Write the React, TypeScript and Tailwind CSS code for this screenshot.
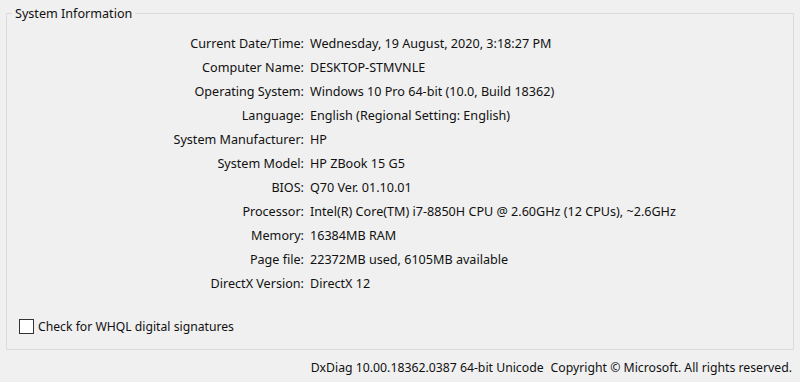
const rows: [string, string][] = [
  ['Current Date/Time:', 'Wednesday, 19 August, 2020, 3:18:27 PM'],
  ['Computer Name:', 'DESKTOP-STMVNLE'],
  ['Operating System:', 'Windows 10 Pro 64-bit (10.0, Build 18362)'],
  ['Language:', 'English (Regional Setting: English)'],
  ['System Manufacturer:', 'HP'],
  ['System Model:', 'HP ZBook 15 G5'],
  ['BIOS:', 'Q70 Ver. 01.10.01'],
  ['Processor:', 'Intel(R) Core(TM) i7-8850H CPU @ 2.60GHz (12 CPUs), ~2.6GHz'],
  ['Memory:', '16384MB RAM'],
  ['Page file:', '22372MB used, 6105MB available'],
  ['DirectX Version:', 'DirectX 12'],
];

const App = () => {
  return (
    <div
      className="w-[800px] h-[382px] bg-[#f0f0f0] text-[#111] text-[12.6px] px-[6px] pt-[5px]"
      style={{ fontFamily: '"Noto Sans", "Open Sans", sans-serif' }}
    >
      <fieldset className="border border-[#dcdcdc] h-[345px] flex flex-col">
        <legend className="ml-[5px] px-[3px] leading-[17px]">System Information</legend>

        {/* info rows */}
        <div className="mt-[10px] flex flex-col">
          {rows.map(([label, value]) => (
            <div key={label} className="flex h-[24px] items-center">
              <span className="w-[297px] text-right">{label}</span>
              <span className="ml-[6px]">{value}</span>
            </div>
          ))}
        </div>

        <label className="mt-auto mb-[13px] ml-[12px] flex items-center gap-[4px] text-[12.2px]">
          <span className="w-[15px] h-[15px] border border-[#333] bg-white" />
          <span>Check for WHQL digital signatures</span>
        </label>
      </fieldset>

      <div className="flex justify-end pr-[2px] mt-[9px] leading-[17px] text-[12.25px]">
        <span>DxDiag 10.00.18362.0387 64-bit Unicode</span>
        <span className="ml-[7px]">Copyright © Microsoft. All rights reserved.</span>
      </div>
    </div>
  );
};

export default App;
